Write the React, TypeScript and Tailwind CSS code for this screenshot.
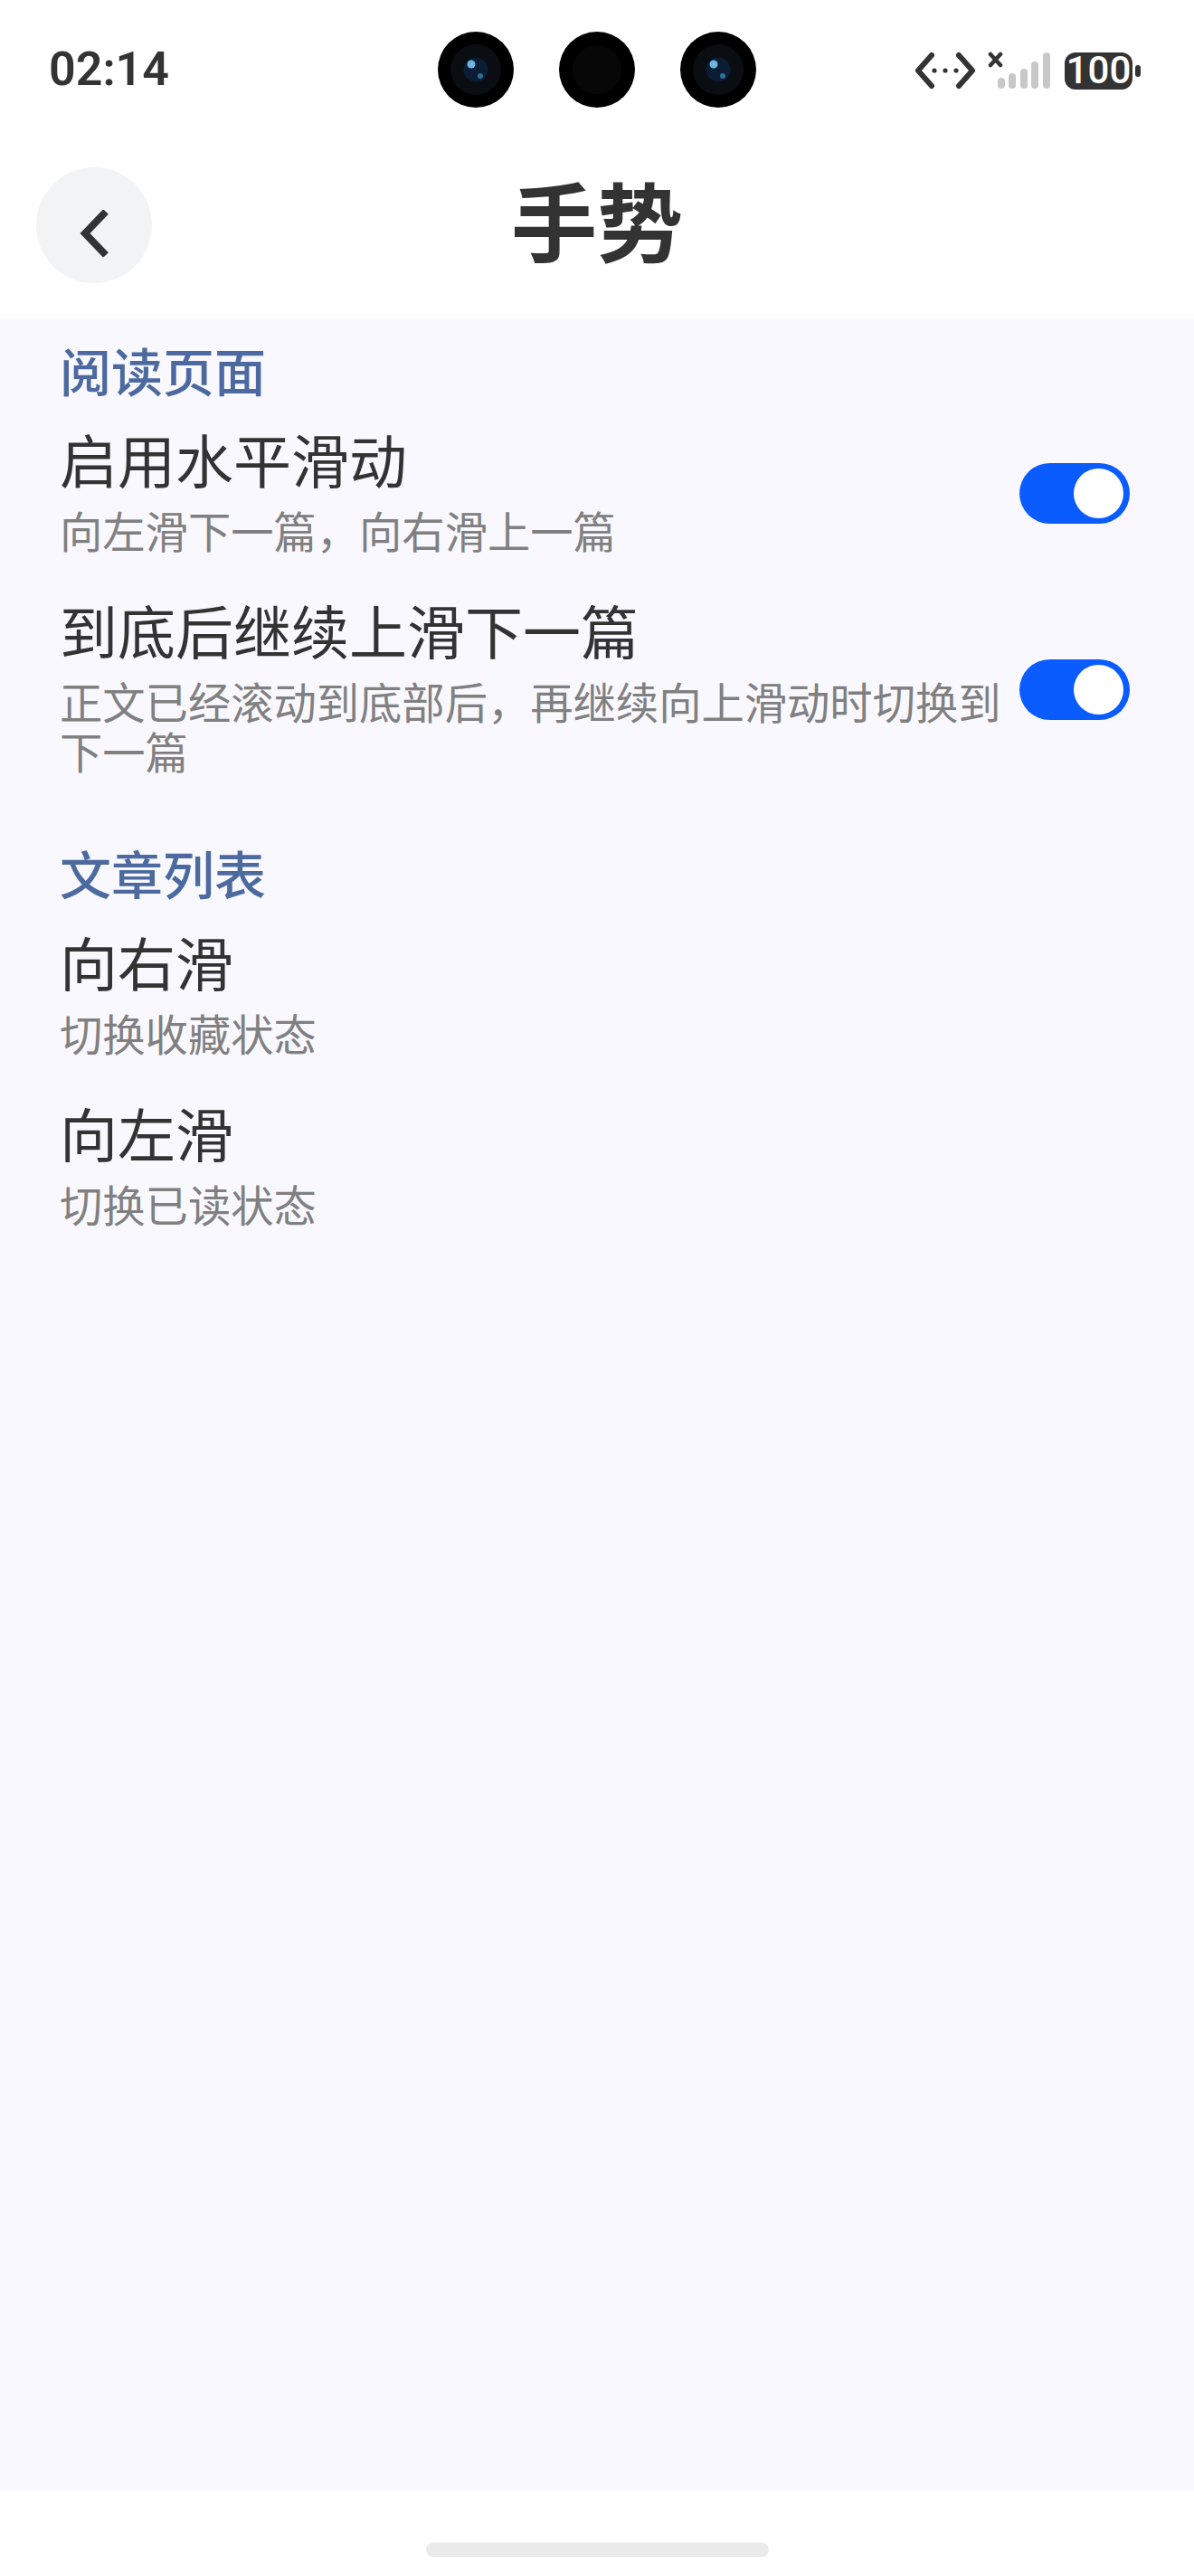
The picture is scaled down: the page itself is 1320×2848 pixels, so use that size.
function Camera({ lens = true }: { lens?: boolean }) {
  return (
    <svg width="84" height="84" viewBox="0 0 84 84">
      <circle cx="42" cy="42" r="42" fill="#000" />
      {lens ? (
        <>
          <circle cx="42" cy="42" r="28" fill="#0a0d11" />
          <circle cx="42" cy="42" r="13.5" fill="#0b1d33" />
          <circle cx="37" cy="36" r="4.5" fill="#6db4e0" />
          <circle cx="47" cy="49" r="3" fill="#2f6f9e" />
        </>
      ) : (
        <circle cx="42" cy="42" r="27" fill="#070707" />
      )}
    </svg>
  );
}

function Toggle() {
  return (
    <div className="mt-3 flex h-[67px] w-[122px] shrink-0 items-center justify-end rounded-full bg-[#0a5cff] pr-[7px]">
      <div className="h-[55px] w-[55px] rounded-full bg-white" />
    </div>
  );
}

function SettingRow({
  title,
  desc,
  toggle,
}: {
  title: string;
  desc: string;
  toggle?: boolean;
}) {
  return (
    <div className="flex items-center justify-between">
      <div className="flex-1">
        <div className="text-[64px] leading-[80px] text-[#333333]">{title}</div>
        <div className="mt-[12px] text-[47.3px] leading-[55px] text-[#808080]">
          {desc}
        </div>
      </div>
      {toggle && <Toggle />}
    </div>
  );
}

export default function App() {
  return (
    <div className="flex h-[2848px] w-[1320px] flex-col bg-white font-['Noto_Sans_CJK_SC',sans-serif]">
      <header className="h-[353px] bg-white">
        <div className="grid h-[154px] grid-cols-[1fr_auto_1fr] items-center">
          <div className="pl-[54px] font-['Roboto',sans-serif] text-[52px] font-semibold text-[#333333]">
            02:14
          </div>
          <div className="flex gap-[50px]">
            <Camera />
            <Camera lens={false} />
            <Camera />
          </div>
          <div className="flex items-center justify-end pr-[59px] pt-[2px]">
            <svg width="70" height="44" viewBox="0 0 70 44" fill="none">
              <path
                d="M20 5 L5 22 L20 39 M50 5 L65 22 L50 39"
                stroke="#333"
                strokeWidth="6"
                strokeLinecap="round"
                strokeLinejoin="round"
              />
              <circle cx="23" cy="22" r="2.6" fill="#333" />
              <circle cx="35" cy="22" r="2.6" fill="#333" />
              <circle cx="47" cy="22" r="2.6" fill="#333" />
            </svg>
            <svg className="ml-[12px]" width="72" height="44" viewBox="0 0 72 44" fill="none">
              <path d="M3 4 L14 16 M14 4 L3 16" stroke="#333" strokeWidth="4.5" strokeLinecap="round" />
              <rect x="11" y="30" width="8" height="12" rx="4" fill="#c8c8c8" />
              <rect x="23" y="25" width="8" height="17" rx="4" fill="#c8c8c8" />
              <rect x="36" y="20" width="8" height="22" rx="4" fill="#c8c8c8" />
              <rect x="48" y="12" width="8" height="30" rx="4" fill="#c8c8c8" />
              <rect x="61" y="2" width="8" height="40" rx="4" fill="#c8c8c8" />
            </svg>
            <div className="ml-[13px] flex h-[41px] w-[75px] items-center justify-center rounded-[12px] bg-[#333333] font-['Roboto',sans-serif] text-[42px] font-medium leading-none text-white">
              100
            </div>
            <div className="ml-[3px] h-[13px] w-[6px] rounded-full bg-[#333333]" />
          </div>
        </div>
        <div className="grid grid-cols-[128px_1fr_128px] items-center px-[40px] pt-[31px]">
          <button className="flex h-[128px] w-[128px] items-center justify-center rounded-full bg-[#f2f3f5]">
            <svg className="mt-[18px]" width="34" height="52" viewBox="0 0 34 52" fill="none">
              <path d="M30 2 L7 26 L30 50" stroke="#333" strokeWidth="8" strokeLinejoin="miter" />
            </svg>
          </button>
          <h1 className="pb-[14px] text-center text-[95px] font-bold leading-[114px] text-[#333333]">
            手势
          </h1>
        </div>
      </header>

      <main className="flex-1 bg-[#f9f8ff] pl-[66px] pr-[71px] pt-[23px]">
        <section>
          <h2 className="text-[57px] font-medium leading-[64px] text-[#4c6a9f]">
            阅读页面
          </h2>
          <div className="mt-[26px] flex flex-col gap-[42px]">
            <SettingRow title="启用水平滑动" desc="向左滑下一篇，向右滑上一篇" toggle />
            <SettingRow
              title="到底后继续上滑下一篇"
              desc="正文已经滚动到底部后，再继续向上滑动时切换到下一篇"
              toggle
            />
          </div>
        </section>
        <section className="mt-[75px]">
          <h2 className="text-[57px] font-medium leading-[64px] text-[#4c6a9f]">
            文章列表
          </h2>
          <div className="mt-[26px] flex flex-col gap-[42px]">
            <SettingRow title="向右滑" desc="切换收藏状态" />
            <SettingRow title="向左滑" desc="切换已读状态" />
          </div>
        </section>
      </main>

      <footer className="flex h-[94px] justify-center bg-white pt-[57px]">
        <div className="h-[16px] w-[379px] rounded-full bg-[#eaeaea]" />
      </footer>
    </div>
  );
}
